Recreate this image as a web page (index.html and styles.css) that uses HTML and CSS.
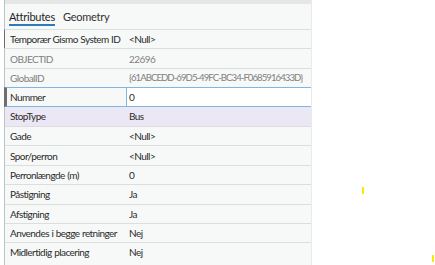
FILE: index.html
```html
<!DOCTYPE html>
<html lang="da">
<head>
    <meta charset="UTF-8">
    <title>Attributes</title>
    <link rel="stylesheet" href="styles.css">
</head>
<body>
    <div class="pane">
        <div class="topbar"></div>
        <div class="tabs">
            <span class="tab active">Attributes</span>
            <span class="tab">Geometry</span>
        </div>
        <div class="rows">
            <div class="row first"><span class="name">Temporær Gismo System ID</span><span class="val">&lt;Null&gt;</span></div>
            <div class="row ro"><span class="name">OBJECTID</span><span class="val">22696</span></div>
            <div class="row ro"><span class="name">GlobalID</span><span class="val guid">{61ABCEDD-69D5-49FC-BC34-F0685916433D}</span></div>
            <div class="row current"><span class="name">Nummer</span><span class="val edit">0</span></div>
            <div class="row picked"><span class="name">StopType</span><span class="val">Bus</span></div>
            <div class="row"><span class="name">Gade</span><span class="val">&lt;Null&gt;</span></div>
            <div class="row"><span class="name">Spor/perron</span><span class="val">&lt;Null&gt;</span></div>
            <div class="row"><span class="name">Perronlængde (m)</span><span class="val">0</span></div>
            <div class="row"><span class="name">Påstigning</span><span class="val">Ja</span></div>
            <div class="row"><span class="name">Afstigning</span><span class="val">Ja</span></div>
            <div class="row"><span class="name">Anvendes i begge retninger</span><span class="val">Nej</span></div>
            <div class="row"><span class="name">Midlertidig placering</span><span class="val">Nej</span></div>
        </div>
    </div>
    <span class="mark m1"></span>
    <span class="mark m2"></span>
</body>
</html>
```

FILE: styles.css
```css
body{
    margin: 0;
    background: #ffffff;
    font-family: Lato, "Liberation Sans", sans-serif;
    font-size: 10px;
    letter-spacing: -0.55px;
    word-spacing: 0.5px;
    color: #2b2b2b;
    position: relative;
    height: 265px;
    overflow: hidden;
}
.pane{
    width: 306px;
    height: 265px;
    margin-left: 4px;
    background: #f7f8f8;
    border-left: 1px solid #b9c3ca;
    border-right: 1px solid #e9eaea;
}
.topbar{
    height: 4px;
    background: #e6e6e6;
}
.tabs{
    display: flex;
    gap: 8px;
    height: 25px;
    padding-left: 4px;
    font-size: 11px;
    letter-spacing: -0.25px;
}
.tab{
    padding-top: 6px;
    height: 14px;
    color: #333333;
}
.tab.active{
    color: #1f1f1f;
    border-bottom: 2px solid #3279b7;
}
.row{
    display: flex;
    align-items: center;
    height: 19.4px;
    box-sizing: border-box;
    border-top: 1px solid #dcdddd;
}
.row.first{
    border-left: 1px solid #6d6d6d;
    margin-left: -1px;
}
.name{
    flex: none;
    width: 116px;
    padding-left: 5px;
    white-space: nowrap;
}
.val{
    flex: 1;
    padding-left: 3px;
    white-space: nowrap;
}
.guid{
    font-size: 9.6px;
    letter-spacing: -0.95px;
}
.ro{
    color: #808080;
}
.current{
    border-left: 3px solid #6f6f6f;
    margin-left: -1px;
    border-top: 1px solid #7fb6e2;
    border-bottom: 1px solid #7fb6e2;
}
.current .name{
    padding-left: 3px;
}
.edit{
    align-self: stretch;
    display: flex;
    align-items: center;
    background: #ffffff;
    border-left: 1px solid #7fb6e2;
    padding-left: 2px;
}
.picked{
    background: #ece7f4;
    border-top: none;
}
.mark{
    position: absolute;
    width: 2px;
    height: 7px;
    background: #ffe800;
}
.m1{
    left: 362px;
    top: 187px;
}
.m2{
    left: 432px;
    top: 255px;
}
```
